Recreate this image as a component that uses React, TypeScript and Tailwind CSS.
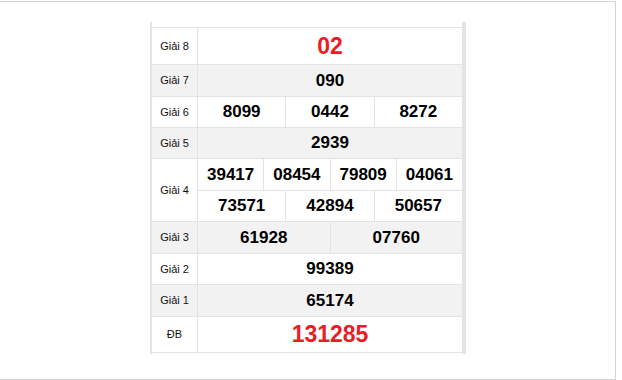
import React from 'react';

type Prize = {
  label: string;
  rows: string[][];
  shaded: boolean;
  big?: boolean;
};

const prizes: Prize[] = [
  { label: 'Giải 8', rows: [['02']], shaded: false, big: true },
  { label: 'Giải 7', rows: [['090']], shaded: true },
  { label: 'Giải 6', rows: [['8099', '0442', '8272']], shaded: false },
  { label: 'Giải 5', rows: [['2939']], shaded: true },
  {
    label: 'Giải 4',
    rows: [
      ['39417', '08454', '79809', '04061'],
      ['73571', '42894', '50657'],
    ],
    shaded: false,
  },
  { label: 'Giải 3', rows: [['61928', '07760']], shaded: true },
  { label: 'Giải 2', rows: [['99389']], shaded: false },
  { label: 'Giải 1', rows: [['65174']], shaded: true },
  { label: 'ĐB', rows: [['131285']], shaded: false, big: true },
];

// number of columns each cell spans in the 12-column results area
const spanClass: Record<number, string> = {
  1: 'col-span-12',
  2: 'col-span-6',
  3: 'col-span-4',
  4: 'col-span-3',
};

const App = () => {
  return (
    <div className="w-[622px] h-[380px] bg-white font-['Liberation_Sans',Arial,sans-serif] overflow-hidden">
      <div className="mt-px w-[616px] h-[379px] border-t border-r border-b border-[#d4d4d4]">
        <div className="ml-[150px] mt-[20px] w-[316px] border-l-2 border-r-4 border-[#e2e4ea] pt-[5px] pb-px">
          {/* results board */}
          <div className="grid grid-cols-[45px_repeat(12,minmax(0,1fr))] grid-rows-[36px_31px_30px_30px_31px_30px_31px_30px_31px_35px] gap-px bg-[#e3e3e3] border-t border-b border-[#e3e3e3]">
            {prizes.map((p) => {
              const bg = p.shaded ? 'bg-[#f2f2f2]' : 'bg-white';
              return (
                <React.Fragment key={p.label}>
                  <div
                    className={`${bg} ${p.rows.length > 1 ? 'row-span-2' : ''} flex items-center justify-center text-[11px] text-[#111]`}
                  >
                    {p.label}
                  </div>
                  {p.rows.map((row, ri) =>
                    row.map((num, ci) => (
                      <div
                        key={`${ri}-${ci}`}
                        className={`${bg} ${spanClass[row.length]} flex items-center justify-center font-bold ${
                          p.big ? 'text-[23px] text-[#ec1c24]' : 'text-[17px] text-black'
                        }`}
                      >
                        {num}
                      </div>
                    ))
                  )}
                </React.Fragment>
              );
            })}
          </div>
        </div>
      </div>
    </div>
  );
};

export default App;
